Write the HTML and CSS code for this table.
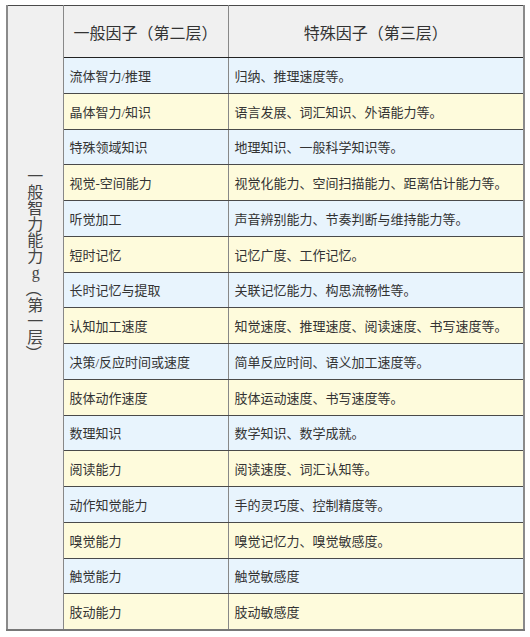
FILE: index.html
```html
<!DOCTYPE html>
<html lang="zh-CN">
<head>
<meta charset="utf-8">
<link rel="stylesheet" href="styles.css">
</head>
<body>
<table class="chc">
  <colgroup>
    <col class="c1"><col class="c2"><col class="c3">
  </colgroup>
  <tr class="head">
    <td class="g" rowspan="17"><span class="gtext">一般智力能力<span class="up">g</span><span class="side">（</span>第一层<span class="side">）</span></span></td>
    <th>一般因子（第二层）</th>
    <th>特殊因子（第三层）</th>
  </tr>
  <tr class="b"><td>流体智力/推理</td><td>归纳、推理速度等。</td></tr>
  <tr class="y"><td>晶体智力/知识</td><td>语言发展、词汇知识、外语能力等。</td></tr>
  <tr class="b"><td>特殊领域知识</td><td>地理知识、一般科学知识等。</td></tr>
  <tr class="y"><td>视觉-空间能力</td><td>视觉化能力、空间扫描能力、距离估计能力等。</td></tr>
  <tr class="b"><td>听觉加工</td><td>声音辨别能力、节奏判断与维持能力等。</td></tr>
  <tr class="y"><td>短时记忆</td><td>记忆广度、工作记忆。</td></tr>
  <tr class="b"><td>长时记忆与提取</td><td>关联记忆能力、构思流畅性等。</td></tr>
  <tr class="y"><td>认知加工速度</td><td>知觉速度、推理速度、阅读速度、书写速度等。</td></tr>
  <tr class="b"><td>决策/反应时间或速度</td><td>简单反应时间、语义加工速度等。</td></tr>
  <tr class="y"><td>肢体动作速度</td><td>肢体运动速度、书写速度等。</td></tr>
  <tr class="b"><td>数理知识</td><td>数学知识、数学成就。</td></tr>
  <tr class="y"><td>阅读能力</td><td>阅读速度、词汇认知等。</td></tr>
  <tr class="b"><td>动作知觉能力</td><td>手的灵巧度、控制精度等。</td></tr>
  <tr class="y"><td>嗅觉能力</td><td>嗅觉记忆力、嗅觉敏感度。</td></tr>
  <tr class="b"><td>触觉能力</td><td>触觉敏感度</td></tr>
  <tr class="y"><td>肢动能力</td><td>肢动敏感度</td></tr>
</table>
</body>
</html>
```
FILE: styles.css
```css
html, body {
  margin: 0;
  padding: 0;
  background: #ffffff;
}
body {
  padding: 5px 0 0 6px;
  font-family: "Liberation Serif", "Noto Sans CJK SC", serif;
  color: #333333;
}
.chc {
  border-collapse: collapse;
  table-layout: fixed;
  width: 517px;
  border-top: 1px solid #222222;
  border-bottom: 2px solid #777777;
  border-left: 2px solid #8a8a8a;
  border-right: 2px solid #8a8a8a;
}
.c1 { width: 56px; }
.c2 { width: 165px; }
.c3 { width: 296px; }
.chc td, .chc th {
  border-left: 1px solid #888888;
  border-right: 1px solid #888888;
  border-top: 1px solid #4a4a4a;
  border-bottom: 1px solid #4a4a4a;
  padding: 0 0 0 6px;
  font-size: 13px;
  text-align: left;
  vertical-align: middle;
  white-space: nowrap;
}
.head { height: 52px; }
.head th {
  background: #f0f0f0;
  font-weight: normal;
  font-size: 16px;
  text-align: center;
  padding: 0;
  border-bottom: 1px solid #222222;
}
.chc td.g {
  background: #f0f0f0;
  padding: 162px 0 0 0;
  text-align: center;
  vertical-align: top;
  border-bottom: 2px solid #777777;
}
.gtext {
  display: inline-block;
  writing-mode: vertical-rl;
  text-orientation: mixed;
  font-family: "Noto Sans CJK SC", sans-serif;
  font-size: 16px;
  line-height: 18px;
  color: #444444;
}
.up {
  text-orientation: upright;
  font-family: "Liberation Serif", serif;
}
.side {
  text-orientation: sideways;
}
.b, .y { height: 35.75px; }
.b td { background: #e8f4fd; }
.y td { background: #fefbdc; }
```
